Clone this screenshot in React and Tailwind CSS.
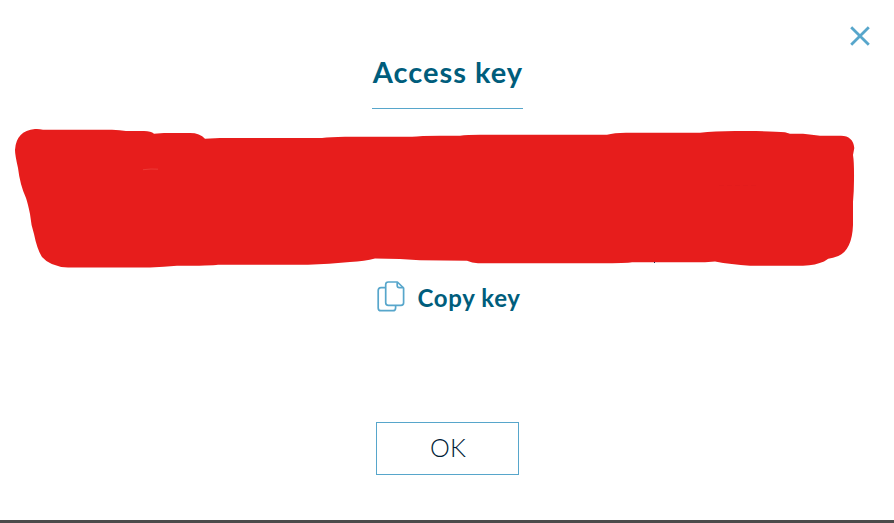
function CloseIcon() {
  return (
    <svg className="block h-5 w-5" viewBox="0 0 20 20" fill="none" stroke="#57a6cb" strokeWidth="2.8">
      <path d="M1.2 1.2 L18.8 18.8 M18.8 1.2 L1.2 18.8" />
    </svg>
  );
}

function CopyIcon() {
  return (
    <svg className="block h-[31px] w-[28px] shrink-0" viewBox="0 0 28 31" fill="none" stroke="#57a6cb" strokeWidth="1.7" strokeLinejoin="round">
      <path d="M9 6.7H4Q1.2 6.7 1.2 9.5V26.9Q1.2 29.7 4 29.7H15.8Q18.6 29.7 18.6 26.9V24.4" />
      <path d="M11.3 1H20.4L26.6 7V21.7Q26.6 24.3 24 24.3H11.3Q8.7 24.3 8.7 21.7V3.6Q8.7 1 11.3 1Z" />
      <path d="M20.2 1.2V4.6Q20.2 6.7 22.3 6.7H26.4" />
    </svg>
  );
}

function Redaction() {
  return (
    <svg className="mt-[11px] block h-[155px] w-full shrink-0" viewBox="0 120 894 155">
      <path
        fill="#e71d1c"
        d="M35 129.1 Q39 128.8 43 129.8 H112 Q120 130.3 126 131 H144 Q151 131.2 154 133.7 L164 133 H190 Q200 133 205 138.8 L220 137.9 H322 Q330 137 345 136.8 H412 Q420 135.8 440 135.7 H460 Q467 134.9 480 134.8 H607 Q614 133 626 132.8 H700 Q714 131 735 131 H756 Q776 131.4 785 132.2 L790 133.8 H803 Q812 134.8 820 135.8 H841 Q853 136 854.3 148 L853 155 Q854.2 162 854 180 Q854 190 853 202 V225 Q852 254 833 257.8 Q828 258 824 261.4 Q816 265 803 265.7 H750 Q731 264.5 715 261.5 L705 262.2 H632 Q627 263.2 600 263.2 H478 Q472 263 467 260.7 L420 260.2 L400 259 L375 258.5 Q365 261 350 262 L329 263.8 L308 264.7 H218 Q212 265.7 177 265.8 Q164 267 150 267.6 H68 Q50 266.5 42 257 Q37 249 34 234 Q31 225 30 214 Q28 204 26 198 Q20 185 18 168 Q15 155 15 150 Q16 131 35 129.1Z"
      />
      <path d="M143 169.7 L151 169 L158 169.2" fill="none" stroke="#ee5750" strokeWidth=".5" />
      <path d="M719 185.5 H759" stroke="#df1d1c" strokeWidth=".5" strokeDasharray="5 3" />
      <rect x="654" y="262" width="1" height="1" fill="#172554" />
    </svg>
  );
}

export default function App() {
  return (
    <main className="relative flex h-[523px] w-[894px] flex-col items-center overflow-hidden border-b-[3px] border-[#4b4b4b] bg-white font-['Lato','Open_Sans',sans-serif] text-[#005d7c]">
      <button aria-label="Close" className="absolute top-[26px] right-6">
        <CloseIcon />
      </button>
      <h1 className="mt-[50px] mr-[-1px] flex h-[59px] w-[151px] shrink-0 justify-center border-b border-[#57a6cb] pl-px text-[29px] leading-[44px] font-bold tracking-[1px] whitespace-nowrap">
        Access key
      </h1>
      <Redaction />
      <button className="mt-[6px] mr-[-3px] flex h-[31px] shrink-0 items-center gap-[13px] text-2xl leading-[31px] font-bold tracking-[0.65px] whitespace-nowrap">
        <CopyIcon />
        <span className="w-[103px] pt-0.5 text-left">Copy key</span>
      </button>
      <button className="mt-[110px] mr-[-1px] flex h-[53px] w-[143px] shrink-0 items-center justify-center border border-[#57a6cb] pb-px pl-px text-[25px] font-light tracking-[0.2px] text-[#001c36]">
        OK
      </button>
    </main>
  );
}
